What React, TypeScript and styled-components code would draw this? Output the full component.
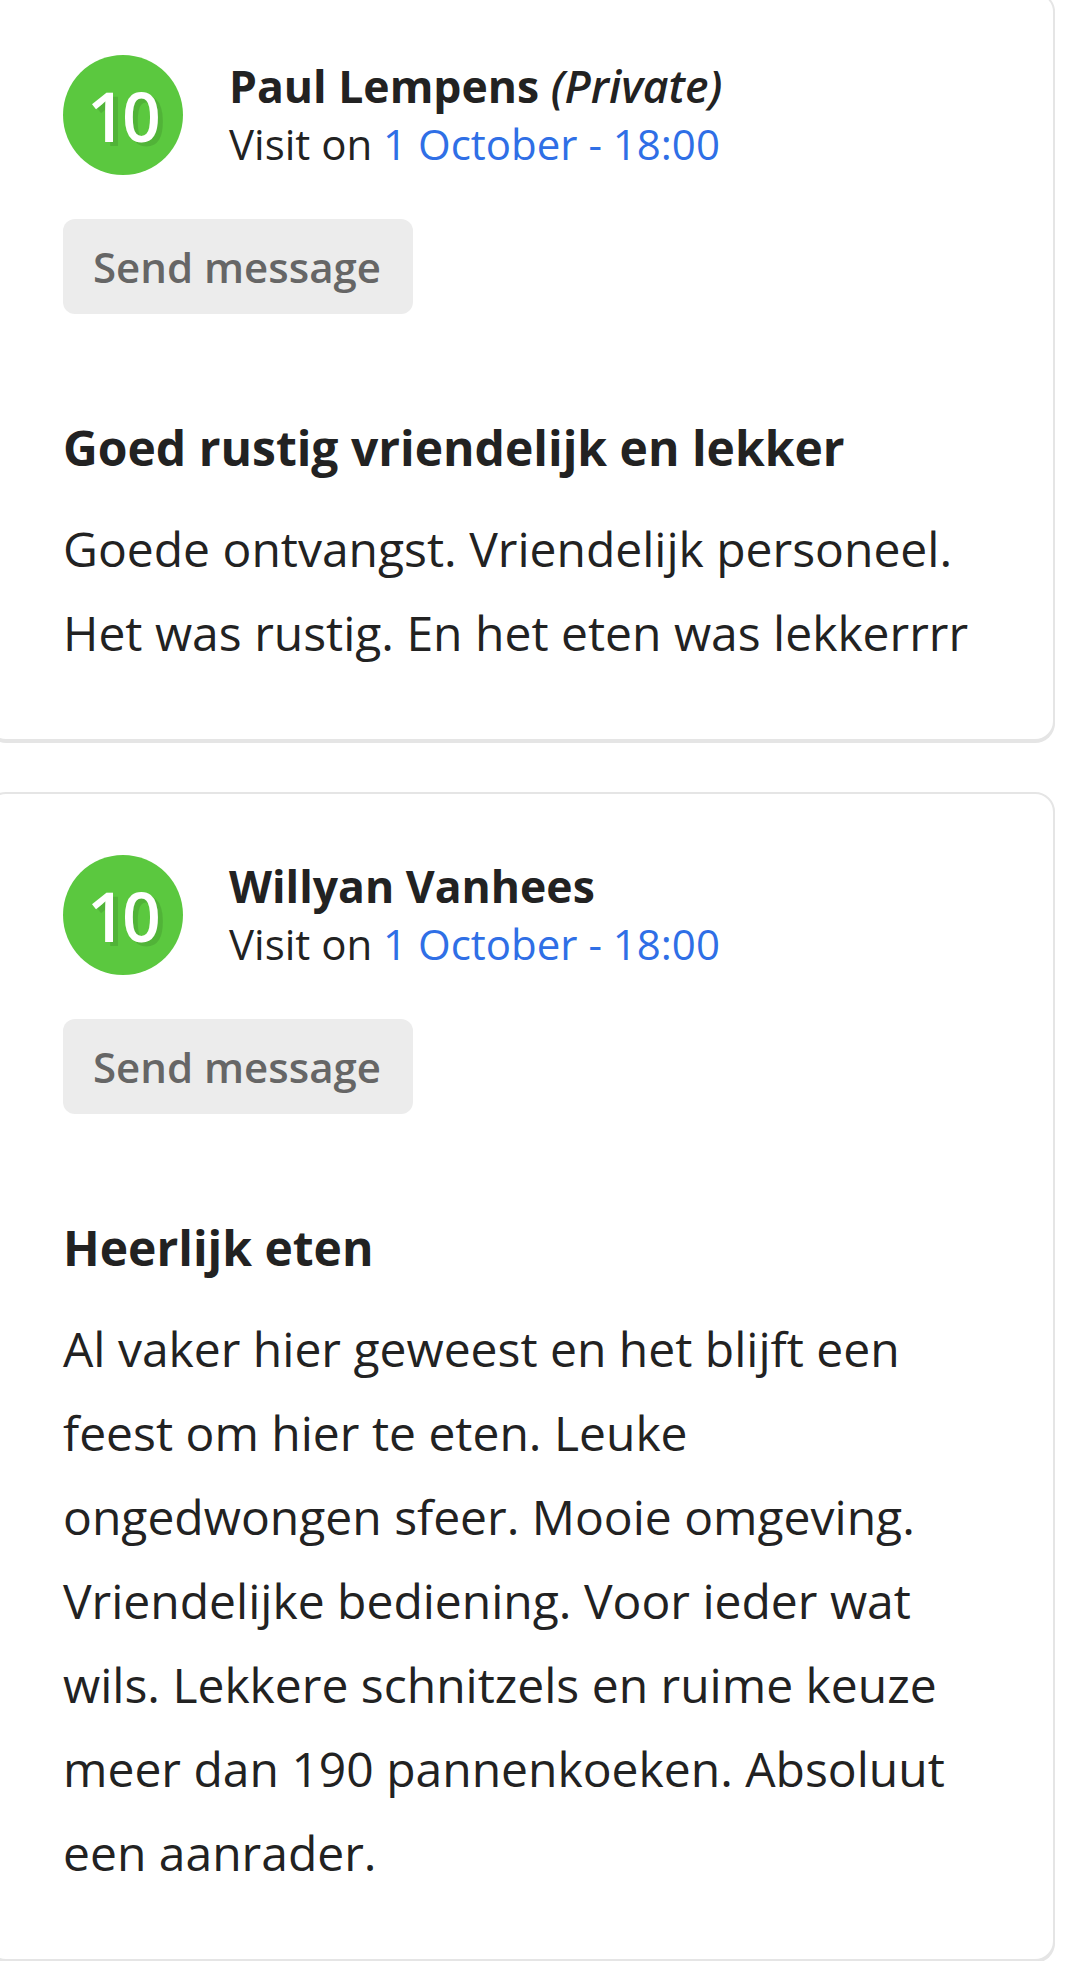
import styled, { createGlobalStyle } from 'styled-components'

const GlobalStyle = createGlobalStyle`
  html, body {
    margin: 0;
    padding: 0;
    background: #ffffff;
    overflow: hidden;
  }
  body {
    font-family: "Open Sans", "Noto Sans", "Liberation Sans", sans-serif;
    color: #222222;
  }
`

const ReviewList = styled.div`
  display: flex;
  flex-direction: column;
  gap: 51px;
  margin-top: -8px;
  margin-left: -14px;
  width: 1069px;
`

const Card = styled.article`
  box-sizing: border-box;
  border: 2px solid #e5e5e5;
  border-radius: 20px;
  box-shadow: 0 2px 0 #e5e5e5;
  background: #ffffff;
  padding: 61px 75px 64px;
`

const Header = styled.div`
  display: flex;
  align-items: center;
  gap: 46px;
`

const Score = styled.div`
  flex: 0 0 auto;
  width: 120px;
  height: 120px;
  border-radius: 50%;
  background: #5bc83f;
  color: #ffffff;
  display: flex;
  align-items: center;
  justify-content: center;
  font-size: 68px;
  font-weight: 600;
  letter-spacing: -4px;
  text-shadow: 5px 4px 0 rgba(0, 0, 0, 0.1);
  padding-right: 2px;
  box-sizing: border-box;
`

const Meta = styled.div`
  display: flex;
  flex-direction: column;
  font-size: 42px;
  line-height: 58px;
`

const Name = styled.div`
  font-size: 44.5px;
  font-weight: 700;
  color: #222222;

  em {
    font-weight: 600;
  }
`

const Visit = styled.div`
  color: #222222;

  span {
    color: #2f6fe6;
  }
`

const MessageButton = styled.button`
  display: inline-flex;
  align-items: center;
  margin-top: 44px;
  height: 95px;
  padding: 0 32px 0 30px;
  border: none;
  border-radius: 12px;
  background: #ececec;
  color: #666666;
  font-family: inherit;
  font-size: 42px;
  font-weight: 600;
`

const Title = styled.h2`
  margin: 100px 0 0;
  font-size: 48px;
  line-height: 67px;
  font-weight: 700;
  color: #222222;
`

const Body = styled.p`
  margin: 26px 0 0;
  font-size: 48px;
  line-height: 84px;
  color: #222222;
`

type Review = {
  score: number
  name: string
  isPrivate?: boolean
  visit: string
  title: string
  text: string
}

const reviews: Review[] = [
  {
    score: 10,
    name: 'Paul Lempens',
    isPrivate: true,
    visit: '1 October - 18:00',
    title: 'Goed rustig vriendelijk en lekker',
    text: 'Goede ontvangst. Vriendelijk personeel. Het was rustig. En het eten was lekkerrrr',
  },
  {
    score: 10,
    name: 'Willyan Vanhees',
    visit: '1 October - 18:00',
    title: 'Heerlijk eten',
    text: 'Al vaker hier geweest en het blijft een feest om hier te eten. Leuke ongedwongen sfeer. Mooie omgeving. Vriendelijke bediening. Voor ieder wat wils. Lekkere schnitzels en ruime keuze meer dan 190 pannenkoeken. Absoluut een aanrader.',
  },
]

const ReviewCard = ({ review }: { review: Review }) => {
  return (
    <Card>
      <Header>
        <Score>{review.score}</Score>
        <Meta>
          <Name>
            {review.name}
            {review.isPrivate && <em> (Private)</em>}
          </Name>
          <Visit>
            Visit on <span>{review.visit}</span>
          </Visit>
        </Meta>
      </Header>
      <MessageButton>Send message</MessageButton>
      <Title>{review.title}</Title>
      <Body>{review.text}</Body>
    </Card>
  )
}

const App = () => {
  return (
    <>
      <GlobalStyle />
      <ReviewList>
        {reviews.map((review) => (
          <ReviewCard key={review.name} review={review} />
        ))}
      </ReviewList>
    </>
  )
}

export default App
